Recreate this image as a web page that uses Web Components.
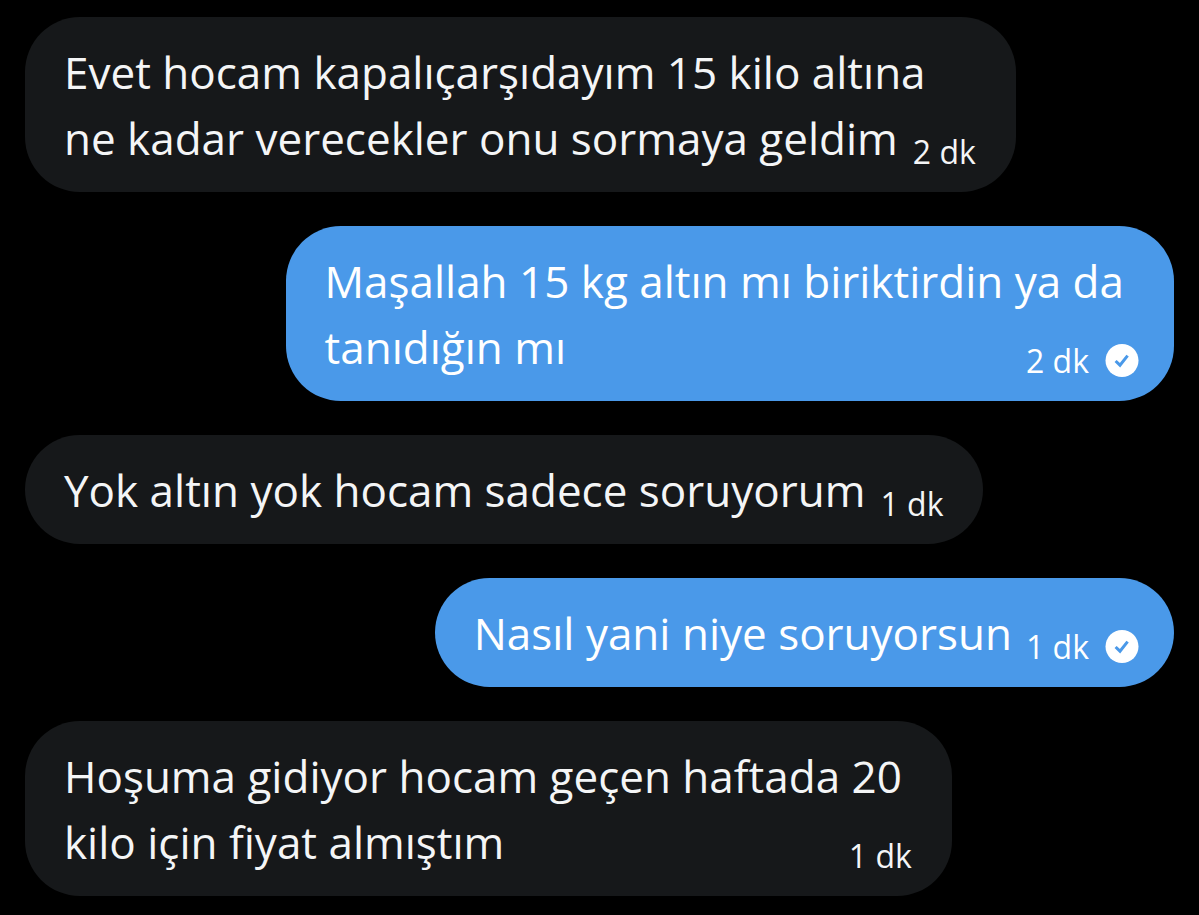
<!DOCTYPE html>
<html lang="tr"><head><meta charset="utf-8"><title>Mesajlar</title>
<style>body{margin:0;background:#000}</style></head><body>
<chat-thread>
<chat-message time="2 dk">Evet hocam kapalıçarşıdayım 15 kilo altına<br>ne kadar verecekler onu sormaya geldim</chat-message>
<chat-message sent time="2 dk">Maşallah 15 kg altın mı biriktirdin ya da<br>tanıdığın mı</chat-message>
<chat-message time="1 dk">Yok altın yok hocam sadece soruyorum</chat-message>
<chat-message sent time="1 dk">Nasıl yani niye soruyorsun</chat-message>
<chat-message time="1 dk">Hoşuma gidiyor hocam geçen haftada 20<br>kilo için fiyat almıştım</chat-message>
</chat-thread>
<script>
class ChatThread extends HTMLElement{
constructor(){super();this.attachShadow({mode:'open'}).innerHTML=`<style>
:host{display:block;font-family:"Open Sans","Noto Sans",sans-serif}
main{display:flex;flex-direction:column;gap:34px;padding:17px 25px}
</style><main><slot></slot></main>`}}
class SeenBadge extends HTMLElement{
constructor(){super();this.attachShadow({mode:'open'}).innerHTML=`<style>
:host{display:block;width:34px;height:34px}svg{display:block}
</style><svg width="34" height="34" viewBox="0 0 34 34" role="img" aria-label="Görüldü"><circle cx="17" cy="16.5" r="16.5" fill="#fff"/><path d="M10.6 17l4.4 4.2 7.6-9.6" fill="none" stroke="#4a99e9" stroke-width="3"/></svg>`}}
class ChatMessage extends HTMLElement{
connectedCallback(){if(this.shadowRoot)return;
const sent=this.hasAttribute('sent');
this.attachShadow({mode:'open'}).innerHTML=`<style>
:host{display:flex;justify-content:flex-start;color:#f4f5f6;--time-room:68px;--time-inset:-10px}
:host([sent]){justify-content:flex-end;color:#fff;--time-room:112px;--time-inset:-15px}
article{display:grid;background:#16181a;border-radius:55px;padding:22px 50px 21px 39px}
:host([sent]) article{background:#4a99e9}
p,footer{grid-area:1/1}
p{margin:0;font-size:44px;line-height:66px;white-space:nowrap}
/* keeps the last line of text clear of the time */
p::after{content:"";display:inline-block;width:var(--time-room)}
footer{display:flex;align-items:center;gap:16px;place-self:end;margin-bottom:2px;margin-right:var(--time-inset);white-space:nowrap}
time{font-size:32px;line-height:34px}
</style><article><p><slot></slot></p><footer><time>${this.getAttribute('time')}</time>${sent?'<seen-badge></seen-badge>':''}</footer></article>`}}
customElements.define('seen-badge',SeenBadge);
customElements.define('chat-message',ChatMessage);
customElements.define('chat-thread',ChatThread);
</script></body></html>
